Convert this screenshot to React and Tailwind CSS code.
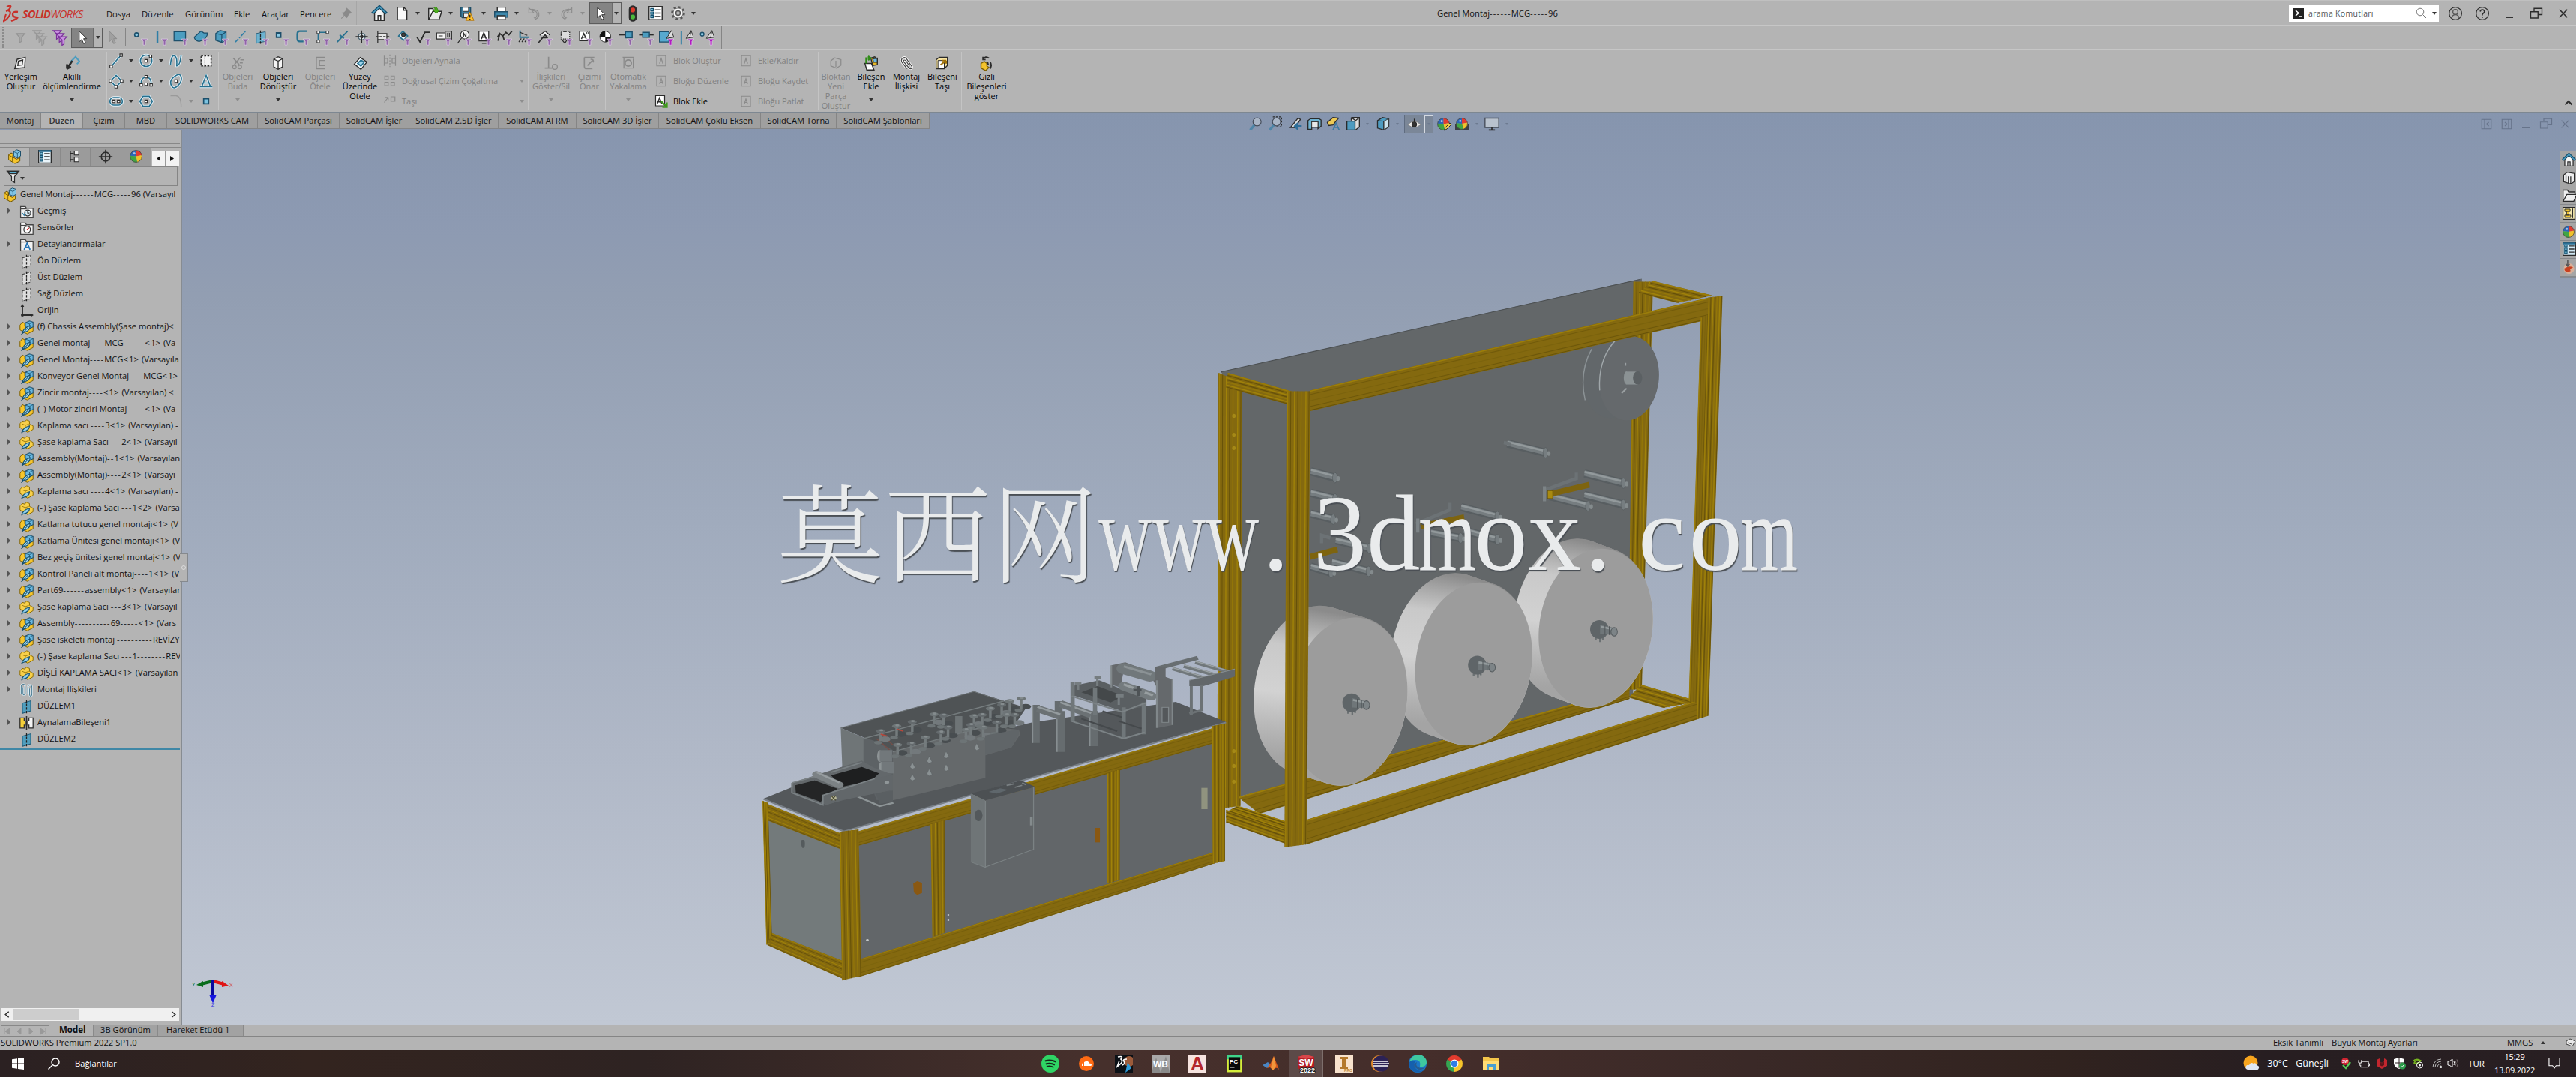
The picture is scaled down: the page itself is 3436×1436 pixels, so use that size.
import React from "react";

const INK = "#2b2b2b";
const BLUE = "#2f7ea6";
const LBLUE = "#7cc3e0";
const GOLD = "#e9b824";

/* ---------- shared small pieces ---------- */
const Ico = ({ s = 20, vb = "0 0 24 24", children, c = "" }) => (
  <svg width={s} height={s} viewBox={vb} fill="none" stroke={INK} strokeWidth="1.6" className={"shrink-0 " + c}>
    {children}
  </svg>
);

const Caret = ({ dim }) => (
  <svg width="6" height="4" viewBox="0 0 6 4" className="shrink-0">
    <path d="M0 0H6L3 4Z" fill={dim ? "#8e8e8e" : "#333"} />
  </svg>
);

/* Runs of hyphens and angle brackets are set a little wider than the letters */
const Dashed = ({ children }) =>
  children.split(/([-<>]+)/).map((part, i) => (i % 2 ? <span key={i} className="tracking-[1.200px]">{part}</span> : part));

/* Lays children on the centres given, by computing the gaps between them */
const CenterRow = ({ start = 0, items, className = "" }) => {
  let x = start;
  return (
    <div className={"flex items-center " + className}>
      {items.map(([c, w, el], i) => {
        const ml = c - w / 2 - x;
        x = c + w / 2;
        return (
          <div key={i} className="flex shrink-0 items-center justify-center" style={{ marginLeft: ml, width: w }}>
            {el}
          </div>
        );
      })}
    </div>
  );
};

/* ---------- icons ---------- */
const House = ({ s = 20 }) => (
  <Ico s={s}>
    <path d="M5 11V22H19V11L12 4Z" fill="#f4f4f4" />
    <path d="M10 22V15H14V22" />
    <path d="M1.5 12L12 2L22.5 12" stroke="#15506f" strokeWidth="4" />
    <path d="M2 12L12 2.5L22 12" stroke="#4a9cc0" strokeWidth="1.6" />
  </Ico>
);
const Doc = () => (
  <Ico s={20}><path d="M5 2H15L20 7V22H5Z" fill="#fafafa" /><path d="M15 2V7H20" /></Ico>
);
const Open = () => (
  <Ico s={22}>
    <path d="M3 5H9L10 8V21H3Z" fill="#fff" /><path d="M3 21L9 9H22L18 21Z" fill="#e9e9e9" />
    <path d="M10 3C14 2 16 4 16 7H19L14 12L9 7H12Q13 4 10 3" fill="#4caf1d" stroke="#2c7a0c" strokeWidth="1" />
  </Ico>
);
const Save = () => (
  <Ico s={22}>
    <path d="M3 3H17V18H5L3 16Z" fill="#3f7f9f" stroke="#1f4d66" /><path d="M6 3H14V9H6Z" fill="#fff" strokeWidth="1" /><path d="M7 12H14V18H7Z" fill="#eee" strokeWidth="1" />
    <path d="M16 10L22 22H10Z" fill="#ffc22e" stroke="#b06f00" strokeWidth="1" /><path d="M16 14V18M16 19.5V21" strokeWidth="1.8" />
  </Ico>
);
const Printer = () => (
  <Ico s={21}><path d="M6 3H18V10H6Z" fill="#fff" /><path d="M2 10H22V18H2Z" fill="#3d89ad" stroke="#1f4d66" /><path d="M6 16H18V22H6Z" fill="#fff" /></Ico>
);
const Undo = ({ flip }) => (
  <Ico s={20} c={flip ? "-scale-x-100" : ""}>
    <path d="M4 3V11H12L9 8Q17 7 17 13T13 19L15 21Q21 18 20 12T9 5L7 6Z" stroke="#8b8b8b" strokeWidth="1.3" />
  </Ico>
);
const Arrow = ({ s = 22, dim }) => (
  <Ico s={s}><path d="M7 2V19L11 15L14 22L17 20.5L14 14H19Z" fill={dim ? "#a0a0a0" : "#fff"} stroke={dim ? "#8b8b8b" : "#333"} strokeWidth="1.2" /></Ico>
);
const Traffic = () => (
  <Ico s={22}><rect x="7" y="1" width="10" height="22" rx="5" fill="#2c2c2c" /><circle cx="12" cy="7" r="3.4" fill="#e03a2c" stroke="none" /><circle cx="12" cy="17" r="3.4" fill="#4db83b" stroke="none" /></Ico>
);
const ListIco = ({ s = 21, frame = "#fff", bar }) => (
  <Ico s={s}>
    <path d="M2 2H22V22H2Z" fill={frame} /><path d="M4.5 5H8.5V8.500H4.500ZM4.500 10.300H8.500V13.800H4.500ZM4.500 15.500H8.500V19H4.500Z" fill={LBLUE} stroke="#14506e" strokeWidth="1.3" />
    <path d="M11 7H20M11 12H20M11 17H20" />
    {bar && <path d="M2 3H22" stroke="#2a6f94" strokeWidth="3" />}
  </Ico>
);
const Gear = () => (
  <Ico s={21}>
    <circle cx="12" cy="12" r="8.600" fill="#f2f2f2" strokeDasharray="3.400 3.350" strokeWidth="4" stroke="#555" /><circle cx="12" cy="12" r="7.600" fill="#f5f5f5" stroke="#555" strokeWidth="1" /><circle cx="12" cy="12" r="3.400" fill="#b4b4b4" stroke="#555" />
  </Ico>
);
const Ball = ({ s = 20 }) => (
  <Ico s={s}>
    <path d="M12 12L2 11A10 10 0 0 1 12 2Z" fill="#2b66b8" stroke="none" />
    <path d="M12 12V2A10 10 0 0 1 22 10Z" fill="#e23b30" stroke="none" />
    <path d="M12 12L22 10A10 10 0 0 1 14 22Z" fill="#f1c22b" stroke="none" />
    <path d="M12 12L14 22A10 10 0 0 1 2 11Z" fill="#41a543" stroke="none" />
    <circle cx="12" cy="12" r="10" stroke="#444" strokeWidth="1" /><circle cx="9" cy="7" r="2" fill="#fff" opacity=".6" stroke="none" />
  </Ico>
);

const Asm = ({ s = 20 }) => (
  <Ico s={s}>
    <path d="M2 9L6 6L9 8V13L15 16L20 13V19L12 23L2 17Z" fill="#f6c52c" stroke="#6b5200" strokeWidth="1.2" />
    <path d="M2 9L8 13V20M8 13L9 8" stroke="#6b5200" strokeWidth="1" />
    <path d="M10 4L15 1L21 3V11L16 14L10 11Z" fill="#7fc4e6" stroke="#1d4f6b" strokeWidth="1.2" />
    <path d="M10 4L16 6.500V14M16 6.500L21 3" stroke="#1d4f6b" strokeWidth="1" />
  </Ico>
);
const AsmFeather = () => (
  <Ico s={19}>
    <path d="M1 8L5 3L9 5V10L15 14L23 10V18L13 23L1 16Z" fill="#f6c52c" stroke="#7a5d00" strokeWidth="1.2" />
    <path d="M10 4L17 1L23 3V11L17 14L10 11Z" fill="#69b8e0" stroke="#1d4f6b" strokeWidth="1.3" />
    <path d="M10 4L17 6V10M17 6L23 3" stroke="#1d4f6b" strokeWidth="1" />
    <path d="M5 22Q6 13 18 9Q18 18 8 20Z" fill="#a5dcf4" stroke="#15506f" strokeWidth="1.500" /><path d="M3 24L15 12" stroke="#15506f" strokeWidth="1.300" />
  </Ico>
);
const PartFeather = () => (
  <Ico s={19}>
    <path d="M1 7L5 3L9 4L12 1L17 3V8L23 11V17L14 22L9 19L1 14Z" fill="#f8d04a" stroke="#8a6a00" strokeWidth="1.2" />
    <path d="M5 8L10 10L16 8M10 10V15" stroke="#8a6a00" strokeWidth="1" />
    <path d="M4 22Q6 14 17 11Q17 19 7 20.500Z" fill="#8fd0ee" stroke="#15506f" strokeWidth="1.500" />
  </Ico>
);
const FolderIco = ({ kind }) => (
  <Ico s={19}>
    <path d="M2 22V3H10L12 6H23V22Z" fill="#f2f2f2" stroke="#444" /><path d="M2 7H12" stroke="#444" />
    {kind === "h" && <><circle cx="14" cy="14" r="5" stroke="#333" fill="#dff1fa" /><path d="M14 11V14H17" /><path d="M5 14L8 18L10 13" stroke={BLUE} /></>}
    {kind === "s" && <><circle cx="13" cy="14" r="5.500" stroke="#333" fill="#fff" /><path d="M13 15L16 11" stroke="#c22" strokeWidth="2" /></>}
    {kind === "a" && <path d="M8 20L13 9L18 20M10 16H16" stroke="#2473b5" strokeWidth="2.4" />}
  </Ico>
);
const PlaneIco = ({ fill }) => (
  <Ico s={19}>
    <path d="M5 6L19 2V19L5 23Z" fill={fill ? "#4f9dbd" : "#dcdcdc"} stroke={fill ? "#1d5875" : "#444"} strokeWidth="1.300" strokeDasharray={fill ? "" : "5 1.500"} />
    <path d="M12 1V24" stroke="#222" strokeDasharray="4 2" />
  </Ico>
);
const OriginIco = () => (
  <Ico s={19}><path d="M5 2V19H22" strokeWidth="2.400" /><path d="M5 0L8 5H2ZM24 19L19 16V22Z" fill={INK} stroke="none" /><circle cx="5" cy="19" r="2.500" fill={INK} stroke="none" /></Ico>
);
const MatesIco = () => (
  <Ico s={19}>
    <path d="M3 18V6Q3 2 6.500 2T10 6V17Q10 20 8 20T6 17V7M14 18V8Q14 3 17.500 3T21 7V18Q21 22 19 22T17 18V9" stroke="#e8f3f8" strokeWidth="3" />
    <path d="M3 18V6Q3 2 6.500 2T10 6V17Q10 20 8 20T6 17V7M14 18V8Q14 3 17.500 3T21 7V18Q21 22 19 22T17 18V9" stroke="#4c7d94" strokeWidth="1.300" />
  </Ico>
);
const MirrorIco = () => (
  <Ico s={19}><path d="M1 3H8V8H10V15H8V20H1Z" fill="#f4cf3a" /><path d="M23 3H16V8H14V15H16V20H23Z" fill="#f4f4f4" /><path d="M12 0V24" strokeWidth="2" /></Ico>
);

/* ---------- selection filter toolbar ---------- */
const Funnel = ({ hot }) => (
  <path d="M13.500 15H24L20.500 19V25H17V19Z" fill={hot ? "#b01cc0" : "#9063a8"} stroke="#ead8f0" strokeWidth=".8" />
);
const FILTERS = [
  <circle cx="6" cy="8" r="3.200" fill="#8ccbe6" stroke="#1b4f6b" strokeWidth="2" />,
  <path d="M7 2V22" stroke={BLUE} strokeWidth="3" />,
  <path d="M1 3H20V18H1Z" fill="#4c9dc0" stroke="#1d4f6b" />,
  <path d="M1 12L12 2L17 5L23 5Q22 16 9 19Q2 18 1 12Z" fill="#4c9dc0" stroke="#1d4f6b" />,
  <path d="M3 6L10 1L20 3V16L14 21L3 17ZM3 6L13 8V21M13 8L20 3" fill="#4c9dc0" stroke="#1d4f6b" />,
  <path d="M2 20L19 2" stroke={BLUE} strokeWidth="2" strokeDasharray="7 2 2 2" />,
  <><path d="M3 6L18 3V19L3 22Z" fill="#6cb2cf" stroke="#1d4f6b" strokeWidth="1" /><path d="M10 1V24" stroke="#222" strokeDasharray="4 2" /></>,
  <path d="M3 5H10V12H3Z" fill="#8ccbe6" stroke="#1d4f6b" strokeWidth="2.400" />,
  <path d="M20 2H8Q4 2 4 7V14Q4 19 8 19H14" stroke="#26708f" strokeWidth="3" />,
  <><path d="M5 4H20M5 4V19" stroke="#26708f" strokeWidth="2" /><path d="M3 2H7V6H3ZM18 2H22V6H18ZM3 17H7V21H3Z" fill="#fff" strokeWidth="1.200" /></>,
  <path d="M3 20L20 2M7 8L14 14" stroke="#26708f" strokeWidth="2.200" />,
  <><circle cx="10" cy="11" r="5.500" stroke="#4b626e" strokeWidth="2" fill="#dfe9ee" /><path d="M10 1V21M0 11H20" strokeWidth="1.400" /><circle cx="10" cy="11" r="2" fill="#333" /></>,
  <><path d="M3 2V21M3 6H18V16H3" fill="#e6e6e6" strokeWidth="1.500" /><path d="M0 11H22" strokeDasharray="4 2" /></>,
  <><path d="M4 10L11 2L19 10L12 17Z" fill="#e7f2f7" stroke="#26708f" strokeWidth="2" /><circle cx="12" cy="8" r="3" fill="#444" /></>,
  <path d="M1 12L6 20L14 4H22" strokeWidth="2.200" />,
  <><path d="M0 5H14V15H0Z" fill="#f3f3f3" strokeWidth="1.300" /><path d="M14 2H25V15H14ZM18 5V12M21 5V12M3 10H10" strokeWidth="1.300" /></>,
  <><circle cx="13" cy="8" r="7" fill="#f5f5f5" strokeWidth="1.300" /><path d="M11 12V5L15 12V5M8 13L1 22" strokeWidth="1.500" /></>,
  <><path d="M3 2H19V18H3Z" fill="#fff" strokeWidth="1.500" /><path d="M7 15L11 5L15 15M8 12H14M8 22H15" strokeWidth="2" /></>,
  <path d="M1 18L4 6L9 10L14 4L19 8L24 2M9 10L11 16M4 6L0 12" strokeWidth="2.200" />,
  <><path d="M4 1V12H18" stroke="#26708f" strokeWidth="2.400" /><path d="M2 20L6 14M7 20L11 14M12 20L16 14M4 4L16 9" /></>,
  <><path d="M3 9L12 2L20 9" fill="#f3f3f3" strokeWidth="1.500" /><path d="M1 21L12 8L16 14M6 13H15" strokeWidth="2" /></>,
  <><path d="M5 3H19V15H5Z" fill="#ddd" strokeDasharray="2 1.500" /><path d="M6 16L11 22L15 16" /></>,
  <><path d="M2 2H18V18H2Z" fill="#fff" strokeWidth="1.400" /><path d="M5 15L9 6L13 15M6 12H12" strokeWidth="1.800" /><circle cx="15" cy="5" r="1.500" strokeWidth="1" /></>,
  <><circle cx="11" cy="11" r="9" fill="#fff" strokeWidth="1.200" /><path d="M11 11V2A9 9 0 0 0 2 11ZM11 11V20A9 9 0 0 0 20 11Z" fill="#111" strokeWidth="0" /></>,
  <><path d="M0 8H12" strokeWidth="2.200" /><path d="M11 3H22V13H11Z" fill="#4c9dc0" stroke="#1d4f6b" strokeWidth="1.800" /></>,
  <><path d="M0 8H24" strokeWidth="2.200" /><path d="M6 4H17V12H6Z" fill="#4c9dc0" stroke="#1d4f6b" strokeWidth="1.800" /></>,
  <><path d="M0 3H16V20H0Z" fill="#57a9cf" stroke="#1d4f6b" /><path d="M12 14L20 1L24 12Z" fill="#ddd" strokeWidth="1.200" /></>,
  <><path d="M3 2V24" stroke={BLUE} strokeWidth="2.400" /><path d="M11 14L19 1L23 12ZM19 1L17 13" fill="#ddd" strokeWidth="1.200" /></>,
  <><circle cx="4" cy="7" r="3" fill="#8ccbe6" stroke="#1b4f6b" /><path d="M11 14L20 1L24 12ZM20 1L18 13" fill="#ddd" strokeWidth="1.200" /></>,
];

const FunnelTri = ({ dim }) => {
  const st = dim ? "#989898" : "#7a2f9a";
  const fl = dim ? "#b0b0b0" : "#c78fe0";
  return (
    <Ico s={22}>
      {[0, 1, 2].map((i) => (
        <path key={i} d={`M${1 + i * 4} ${2 + i * 4.500}h12l-4 4.500v6l-3 2v-8z`} fill={fl} stroke={st} strokeWidth="1.300" />
      ))}
    </Ico>
  );
};

const SelectBox = ({ w = 43, h = 28 }) => (
  <div className="flex border border-[#5c5c5c]" style={{ width: w, height: h }}>
    <div className="flex flex-1 items-center justify-center bg-[#848484]"><Arrow s={20} /></div>
    <div className="flex w-[12px] items-center justify-center border-l border-[#6b6b6b]"><Caret /></div>
  </div>
);

/* ---------- top bars ---------- */
function TitleBar() {
  const menu = [["Dosya", 47], ["Düzenle", 58], ["Görünüm", 65], ["Ekle", 37], ["Araçlar", 51], ["Pencere", 54]];
  return (
    <div className="flex h-[34px] items-center border-b border-[#c6c6c6] border-t-2 border-t-[#c0c0c0]">
      <div className="flex w-[142px] items-center pl-[4px]">
        <svg width="22" height="24" viewBox="0 0 22 24" fill="none" stroke="#c8312b" strokeWidth="2">
          <path d="M5 3Q12 0 10 4Q8 8 4 9M4 8Q12 8 9 14Q6 20 1 22L4 13" /><path d="M20 10Q13 9 13 13T18 17T11 22" strokeWidth="2.400" />
        </svg>
        <div className="pl-[4px] pt-1 text-[14.500px] italic leading-none tracking-[-0.6px] text-[#c8312b]"><b>SOLID</b>WORKS</div>
      </div>
      {menu.map(([t, w]) => <div key={t} className="shrink-0 pt-[2px] font-medium" style={{ width: w }}>{t}</div>)}
      <div className="w-[21px]">
        <Ico s={16}><path d="M13 2L22 11L18 12L14 17L13 20L4 11L8 10L12 6ZM8 15L2 22" fill="#8a8a8a" stroke="#8a8a8a" /></Ico>
      </div>
      <div className="h-full w-px bg-[#a6a6a6]" />
      <CenterRow start={476} items={[
        [506, 20, <House s={22} />], [536, 20, <Doc />], [557, 6, <Caret />], [580, 22, <Open />], [601, 6, <Caret />], [623, 22, <Save />], [645, 6, <Caret />],
        [668, 21, <Printer />], [689, 6, <Caret />], [712, 20, <Undo />], [733, 6, <Caret dim />], [756, 20, <Undo flip />], [777, 6, <Caret dim />],
        [807, 43, <SelectBox h={29} />], [844, 22, <Traffic />], [874, 21, <ListIco />], [904, 21, <Gear />], [925, 6, <Caret />],
      ]} />
      <div className="w-[989px]" />
      <div className="w-[1136px] shrink-0"><Dashed>Genel Montaj------MCG-----96</Dashed></div>
      <div className="flex h-[22px] w-[200px] shrink-0 items-center bg-white pl-[6px] text-[10.500px] tracking-[0.3px] text-[#555]">
        <svg width="14" height="14" viewBox="0 0 14 14" className="mr-[6px]"><rect width="14" height="14" fill="#222" /><path d="M3 3L7 6.500L3 10M8 11H12" stroke="#fff" strokeWidth="1.500" fill="none" /></svg>
        <span className="flex-1">arama Komutları</span>
        <svg width="15" height="15" viewBox="0 0 15 15" fill="none" stroke="#777"><circle cx="6" cy="6" r="4.800" /><path d="M9.500 9.500L14 14" /></svg>
        <span className="ml-[7px] mr-[3px]"><Caret /></span>
      </div>
      <CenterRow start={3253} items={[
        [3275, 20, <Ico s={20}><circle cx="12" cy="12" r="10" /><circle cx="12" cy="9.500" r="4" stroke="#555" /><path d="M6 19Q7 14 12 14T18 19" stroke="#555" /></Ico>],
        [3311, 20, <Ico s={20}><circle cx="12" cy="12" r="10" /><path d="M8.500 9Q9 6 12 6T15.500 9Q15.500 11 12 12.500V15M12 17V19" strokeWidth="2" /></Ico>],
        [3347, 12, <div className="mt-[10px] h-[2px] w-[10px] bg-[#333]" />],
        [3383, 16, <Ico s={18}><path d="M8 8V3H22V14H15M2 9H15V20H2Z" strokeWidth="1.800" /></Ico>],
        [3419, 14, <Ico s={14}><path d="M3 3L21 21M21 3L3 21" strokeWidth="2.600" /></Ico>],
      ]} />
    </div>
  );
}

function FilterBar() {
  const head = [
    [4, 6, <div className="h-[28px] w-0 border-l-2 border-dotted border-[#8b8b8b]" />],
    [27, 16, <Ico s={17}><path d="M4 4H20L14 11V19L10 21V11Z" stroke="#939393" fill="#a8a8a8" /></Ico>],
    [54, 20, <FunnelTri dim />],
    [81, 20, <FunnelTri />],
    [116, 42, <SelectBox w={42} h={27} />],
    [150, 20, <Arrow s={20} dim />],
    [167, 2, <div className="h-[24px] w-px bg-[#858585]" />],
  ];
  const rest = FILTERS.map((g, i) => [187 + i * 27, 22, <Ico s={21} vb="0 0 25 26">{g}<Funnel hot={i > 25} /></Ico>]);
  return (
    <div className="flex h-[33px] items-center border-b border-[#c6c6c6]">
      <CenterRow items={[...head, ...rest, [962, 2, <div className="h-[31px] w-px bg-[#858585]" />]]} />
    </div>
  );
}

/* ---------- ribbon ---------- */
const Big = ({ icon, lines, dim, caret }) => (
  <div className={"flex h-[82px] flex-col items-center pt-[8px] text-center leading-[13px] " + (dim ? "text-[#818181]" : "text-black")}>
    <div className="mb-[2px] flex h-[18px] items-center">{icon}</div>
    {lines.map((l) => <div key={l} className="whitespace-nowrap">{l}</div>)}
    {caret && <div className={lines.length === 2 ? "mt-[10px]" : ""}><Caret dim={dim} /></div>}
  </div>
);
const Sep = () => <div className="h-[78px] w-px bg-[#c4c4c4]" />;
const DG = "#8a8a8a";
const dimBox = <Ico s={18}><path d="M4 3H20V21H4Z" stroke={DG} /><path d="M9 17L12 8L15 17M10 14H14" stroke={DG} /></Ico>;

const SmallList = ({ rows }) => (
  <div className="flex h-[80px] w-full flex-col justify-around">
    {rows.map(([ic, t, on, caret]) => (
      <div key={t} className={"flex h-[24px] items-center whitespace-nowrap " + (on ? "text-black" : "text-[#818181]")}>
        <span className="mr-[7px]">{ic}</span><span className="flex-1">{t}</span>{caret && <Caret dim />}
      </div>
    ))}
  </div>
);

function SketchGrid() {
  const S = (d, extra) => <Ico s={20}><path d={d} stroke="#e6f3f9" strokeWidth="4" /><path d={d} stroke="#26708f" strokeWidth="2" />{extra}</Ico>;
  const sq = (x, y) => <path key={x + "-" + y} d={`M${x - 2} ${y - 2}h4v4h-4z`} fill="#fff" strokeWidth="1.300" />;
  const rows = [
    [S("M4 21L20 3", <>{sq(4, 21)}{sq(20, 3)}</>), 1, S("M12 3a9 9 0 1 0 .1 0", <>{sq(12, 12)}{sq(19, 5)}</>), 1, S("M3 19Q4 3 9 4T13 20Q18 20 20 3"), 1, <Ico s={20}><path d="M4 4H20V20H4Z" fill="#f2f2f2" strokeDasharray="3 2" strokeWidth="2" /><path d="M10 2V22M15 2V22" strokeWidth="1" strokeDasharray="2 1" /></Ico>],
    [S("M3 12L12 3L21 12L12 21Z", <>{sq(3, 12)}{sq(12, 21)}{sq(21, 12)}</>), 1, S("M4 18Q3 6 12 6T20 18", <>{sq(4, 18)}{sq(12, 17)}{sq(20, 18)}{sq(12, 5)}</>), 1, S("M5 20Q0 12 9 5T20 5T15 19T5 20", <>{sq(12, 12)}</>), 1, S("M2 21H22M5 21L12 3L19 21M8 15H16")],
    [S("M8 6H16A6 6 0 0 1 16 18H8A6 6 0 0 1 8 6", <>{sq(8, 12)}{sq(16, 12)}</>), 1, S("M7 4H17L22 12L17 20H7L2 12Z", <>{sq(12, 12)}</>), 0, <Ico s={20}><path d="M3 3H12Q20 4 20 21" stroke="#9a9a9a" /></Ico>, 2, <Ico s={20}><path d="M8 8H16V16H8Z" fill={LBLUE} stroke="#1b4f6b" strokeWidth="2" /></Ico>],
  ];
  return (
    <div className="grid h-[80px] w-[140px] grid-cols-[20px_20px_20px_20px_20px_20px_20px] items-center justify-items-center">
      {rows.map((r, i) => r.map((e, j) => (
        <div key={i + "-" + j}>{j % 2 ? (e ? <Caret dim={e === 2} /> : null) : e}</div>
      )))}
    </div>
  );
}

function Ribbon() {
  const box = <Ico s={20}><path d="M5 6L12 2L19 5V18L12 22L5 18Z" fill="#f5f5f5" /><path d="M5 6L12 9V22M12 9L19 5" /></Ico>;
  return (
    <div className="flex h-[82px] items-center text-[11px]">
      <CenterRow items={[
        [28, 54, <Big icon={<Ico s={20}><path d="M6 6L19 3L18 19L2 21Z" fill="#eee" /><path d="M8 9L15 7L14 15L7 16Z" /></Ico>} lines={["Yerleşim", "Oluştur"]} />],
        [96, 82, <Big caret icon={<Ico s={21}><path d="M9 10L17 2L23 9L19 13" stroke="#4c9dc0" strokeWidth="2.400" /><path d="M4 20L12 8M4 20V13M4 20L10 17" strokeWidth="3" /></Ico>} lines={["Akıllı", "ölçümlendirme"]} />],
        [142, 1, <Sep />], [215, 140, <SketchGrid />], [291, 1, <Sep />],
        [317, 44, <Big dim caret icon={<Ico s={19}><path d="M4 3L14 14M16 2L6 14M16 6H22M15 11H20" stroke={DG} strokeWidth="2" /><circle cx="6" cy="18" r="3" stroke={DG} /><circle cx="15" cy="18" r="3" stroke={DG} /></Ico>} lines={["Objeleri", "Buda"]} />],
        [371, 54, <Big caret icon={box} lines={["Objeleri", "Dönüştür"]} />],
        [427, 44, <Big dim icon={<Ico s={20}><path d="M20 3H6V21H20M20 8H11V16H20" stroke={DG} /></Ico>} lines={["Objeleri", "Ötele"]} />],
        [480, 50, <Big icon={<Ico s={21}><path d="M3 13L12 3L22 10L13 21Z" fill="#fff" /><path d="M8 12L13 7L18 10L13 16Z" fill="#9fd4ea" stroke="#26708f" strokeWidth="2" /></Ico>} lines={["Yüzey", "Üzerinde", "Ötele"]} />],
        [605, 188, <SmallList rows={[
          [<Ico s={18}><path d="M2 3V21M2 8H8V16H2M22 3V21M22 8H16V16H22" stroke={DG} /><path d="M12 1V23" stroke={DG} strokeDasharray="3 2" /></Ico>, "Objeleri Aynala"],
          [<Ico s={18}><path d="M3 3H9V9H3ZM14 3H20V9H14ZM3 14H9V20H3ZM14 14H20V20H14Z" stroke={DG} /></Ico>, "Doğrusal Çizim Çoğaltma", 0, 1],
          [<Ico s={18}><path d="M2 14L9 5M9 5H4M9 5V10M14 4H21V12H14Z" stroke={DG} /></Ico>, "Taşı", 0, 1],
        ]} />],
        [704, 1, <Sep />],
        [735, 54, <Big dim caret icon={<Ico s={20}><path d="M8 2V20M2 20H14" stroke={DG} strokeWidth="2" /><circle cx="18" cy="18" r="4" stroke={DG} /></Ico>} lines={["İlişkileri", "Göster/Sil"]} />],
        [786, 38, <Big dim icon={<Ico s={20}><path d="M4 3H20M4 3V17Q4 21 8 21H17M9 16L17 8M14 6Q20 6 18 11" stroke={DG} strokeWidth="2" /></Ico>} lines={["Çizimi", "Onar"]} />],
        [807, 1, <Sep />],
        [838, 50, <Big dim caret icon={<Ico s={20}><path d="M3 3H21M5 3V20H20V5" stroke={DG} /><circle cx="12" cy="12" r="5" stroke={DG} strokeWidth="2" /></Ico>} lines={["Otomatik", "Yakalama"]} />],
        [868, 1, <Sep />],
        [926, 106, <SmallList rows={[[dimBox, "Blok Oluştur"], [dimBox, "Bloğu Düzenle"],
          [<Ico s={18}><path d="M2 2H18V20H2Z" fill="#fff" /><path d="M5 16L9 6L13 16M6 13H12" strokeWidth="2" /><path d="M12 12L22 22M22 14V22H14" stroke="#3f9b1c" strokeWidth="3" /></Ico>, "Blok Ekle", 1]]} />],
        [1036, 100, <SmallList rows={[[dimBox, "Ekle/Kaldır"], [dimBox, "Bloğu Kaydet"], [dimBox, "Bloğu Patlat"]]} />],
        [1091, 1, <Sep />],
        [1115, 44, <Big dim icon={<Ico s={18}><path d="M3 8L10 3L21 6V16L13 21L3 17ZM12 8V19" stroke={DG} /></Ico>} lines={["Bloktan", "Yeni", "Parça", "Oluştur"]} />],
        [1162, 44, <Big caret icon={<Ico s={21}><path d="M3 12H13L17 22H6Z" fill="#fff" /><path d="M12 4L18 2L22 5V14L15 15Z" fill={GOLD} /><path d="M15 5L22 4V10H16Z" fill="#6bb7df" /><path d="M5 12V4H10M8 1L12 4L8 7" stroke="#2f8c17" strokeWidth="2.500" /></Ico>} lines={["Bileşen", "Ekle"]} />],
        [1209, 44, <Big icon={<Ico s={20}><path d="M5 5Q9 1 12 5L21 18Q21 22 17 21L7 9Q8 6 11 8L17 17M5 5Q3 8 5 11L13 21" stroke="#fff" strokeWidth="3.400" /><path d="M5 5Q9 1 12 5L21 18Q21 22 17 21L7 9Q8 6 11 8L17 17M5 5Q3 8 5 11L13 21" stroke="#444" strokeWidth="1.500" /></Ico>} lines={["Montaj", "İlişkisi"]} />],
        [1257, 44, <Big icon={<Ico s={20}><path d="M2 7L7 3L20 3V16L15 21H2Z" fill="#f7e3a0" /><path d="M5 8H15V20H5Z" fill="#fff" strokeWidth="1.200" /><path d="M9 15L18 8M18 8H12M18 8V13" stroke="#a0720a" strokeWidth="2.500" /></Ico>} lines={["Bileşeni", "Taşı"]} />],
        [1282, 1, <Sep />],
        [1316, 56, <Big icon={<Ico s={21}><path d="M4 12L9 9L13 12V16L16 18L11 23L4 19Z" fill="#f3c32e" stroke="#7a5d00" /><path d="M7 6Q11 0 16 4M7 2V6H11M18 10Q21 14 18 20M14 10L15 14" strokeWidth="2" /></Ico>} lines={["Gizli", "Bileşenleri", "göster"]} />],
      ]} />
      <div className="ml-auto mr-[4px] mt-auto pb-[6px]"><Ico s={12}><path d="M3 17L12 8L21 17" strokeWidth="4" /></Ico></div>
    </div>
  );
}

const TABS = [["Montaj", 55], ["Düzen", 56, 1], ["Çizim", 56], ["MBD", 56], ["SOLIDWORKS CAM", 121], ["SolidCAM Parçası", 109], ["SolidCAM İşler", 93], ["SolidCAM 2.5D İşler", 119], ["SolidCAM AFRM", 104], ["SolidCAM 3D İşler", 110], ["SolidCAM Çoklu Eksen", 136], ["SolidCAM Torna", 101], ["SolidCAM Şablonları", 124]];

/* ---------- feature tree ---------- */
const TREE = [
  [1, "h", "Geçmiş"], [0, "s", "Sensörler"], [1, "a", "Detaylandırmalar"], [0, "p", "Ön Düzlem"], [0, "p", "Üst Düzlem"], [0, "p", "Sağ Düzlem"], [0, "o", "Orijin"],
  [1, "A", "(f) Chassis Assembly(Şase montaj)<"], [1, "A", "Genel montaj----MCG------<1> (Va"], [1, "A", "Genel Montaj----MCG<1> (Varsayıla"],
  [1, "A", "Konveyor Genel Montaj----MCG<1>"], [1, "A", "Zincir montaj----<1> (Varsayılan) <"], [1, "A", "(-) Motor zinciri Montaj-----<1> (Va"],
  [1, "P", "Kaplama sacı ----3<1> (Varsayılan) -"], [1, "P", "Şase kaplama Sacı ---2<1> (Varsayıl"], [1, "A", "Assembly(Montaj)--1<1> (Varsayılan"],
  [1, "A", "Assembly(Montaj)----2<1> (Varsayı"], [1, "P", "Kaplama sacı ----4<1> (Varsayılan) -"], [1, "P", "(-) Şase kaplama Sacı ---1<2> (Varsa"],
  [1, "A", "Katlama tutucu genel montajı<1> (V"], [1, "A", "Katlama Ünitesi genel montajı<1> (V"], [1, "A", "Bez geçiş ünitesi genel montaj<1> (V"],
  [1, "A", "Kontrol Paneli alt montaj----1<1> (V"], [1, "A", "Part69------assembly<1> (Varsayılan"], [1, "P", "Şase kaplama Sacı ---3<1> (Varsayıl"],
  [1, "A", "Assembly----------69-----<1> (Vars"], [1, "A", "Şase iskeleti montaj ----------REVİZY"], [1, "P", "(-) Şase kaplama Sacı ---1--------REV"],
  [1, "P", "DİŞLİ KAPLAMA SACI<1> (Varsayılan"], [1, "m", "Montaj İlişkileri"], [0, "d", "DÜZLEM1"], [1, "y", "AynalamaBileşeni1"], [0, "d", "DÜZLEM2"],
];
const treeIcon = (k) => ({
  h: <FolderIco kind="h" />, s: <FolderIco kind="s" />, a: <FolderIco kind="a" />, p: <PlaneIco />, d: <PlaneIco fill />, o: <OriginIco />,
  A: <AsmFeather />, P: <PartFeather />, m: <MatesIco />, y: <MirrorIco />,
}[k]);

function Panel() {
  const tabs = [
    <Asm s={20} />,
    <ListIco s={20} frame="#e9f4fa" bar />,
    <Ico s={18}><path d="M4 2V21M4 6H10M4 17H10" /><path d="M11 2H19V9H11ZM11 13H19V21H11Z" fill="#eee" /></Ico>,
    <Ico s={20}><circle cx="12" cy="12" r="7" strokeWidth="2" /><path d="M12 1V23M1 12H23" strokeWidth="2" /></Ico>,
    <Ball s={19} />,
  ];
  return (
    <div className="flex w-[243px] shrink-0 flex-col border-r-2 border-[#878c92] bg-[#b4b4b4]">
      <div className="mr-[1px] h-[19px] border-b border-[#888] border-t border-t-[#ccc]" />
      <div className="mt-[4px] flex h-[26px] border-t border-[#888]">
        {tabs.map((t, i) => (
          <div key={i} className={"flex w-[40.400px] items-center justify-center border-r border-[#8a8a8a] pb-[2px] " + (i ? "bg-[#9b9b9b]" : "bg-[#b4b4b4]")}>{t}</div>
        ))}
        <div className="ml-[1px] mt-[5px] flex h-[19px] bg-[#f2f2f2]">
          <div className="flex w-[18px] items-center justify-center border-r border-[#999]"><svg width="5" height="7"><path d="M5 0V7L0 3.500Z" fill="#111" /></svg></div>
          <div className="flex w-[18px] items-center justify-center"><svg width="5" height="7"><path d="M0 0V7L5 3.500Z" fill="#111" /></svg></div>
        </div>
      </div>
      <div className="mb-[1px] ml-[5px] flex h-[26px] w-[232px] items-center border border-[#858585] pl-[2px]">
        <Ico s={19}><path d="M2 3H22L14.500 12V22L9.500 19V12Z" fill="#f4f4f4" /><path d="M3 3H21L18 7H6Z" fill="#5aaed0" /></Ico>
        <span className="mt-[6px]"><Caret /></span>
      </div>
      <div className="w-[240px] overflow-hidden">
        <div className="flex h-[22px] items-center whitespace-nowrap pb-[1px] pl-[4px]"><Asm s={20} /><span className="pb-[1px] pl-[3px]"><Dashed>Genel Montaj------MCG-----96 (Varsayıl</Dashed></span></div>
        {TREE.map(([ex, k, t], i) => (
          <div key={i} className="flex h-[22px] items-center whitespace-nowrap">
            <div className="w-[26px] shrink-0 pb-[3px] pl-[10px]">{ex ? <svg width="4" height="8"><path d="M0 0V8L4 4Z" fill="#555" /></svg> : null}</div>
            {treeIcon(k)}
            <span className="pb-[2px] pl-[5px]"><Dashed>{t}</Dashed></span>
          </div>
        ))}
        <div className="h-[3px] w-[240px] bg-[#3f87a6]" />
      </div>
      <div className="mb-[5px] ml-[1px] mt-auto flex h-[17px] w-[238px] items-center bg-[#f0f0f0]">
        <div className="flex w-[17px] justify-center"><Ico s={9}><path d="M18 2L6 12L18 22" strokeWidth="4" /></Ico></div>
        <div className="h-[15px] w-[88px] bg-[#cdcdcd]" />
        <div className="ml-auto flex w-[15px] justify-center"><Ico s={9}><path d="M6 2L18 12L6 22" strokeWidth="4" /></Ico></div>
      </div>
    </div>
  );
}

/* ---------- 3D model drawing ---------- */
const lerp = (p, q, t) => [p[0] + (q[0] - p[0]) * t, p[1] + (q[1] - p[1]) * t];
/* An aluminium profile: corners a-b along one edge, d-c along the other */
const Beam = ({ a, b, c, d, base = "#84690f", lines = [[0.04, "#9c7e0a", 3], [0.2, "#725b0b", 2], [0.5, "#7b630d", 2], [0.78, "#6e580b", 2], [0.96, "#665209", 2]] }) => (
  <g>
    <polygon points={[a, b, c, d].map((p) => p.join(",")).join(" ")} fill={base} />
    {lines.map(([t, col, w], i) => {
      const s = lerp(a, d, t), e = lerp(b, c, t);
      return <line key={i} x1={s[0]} y1={s[1]} x2={e[0]} y2={e[1]} stroke={col} strokeWidth={w} />;
    })}
  </g>
);
const POST = [[0.05, "#9c7e08", 3], [0.18, "#665109", 2], [0.34, "#a08209", 3], [0.48, "#665109", 2.5], [0.62, "#937609", 3], [0.82, "#a08209", 3], [0.95, "#665109", 2]];
const Post = (p) => <Beam {...p} lines={POST} />;

const Rod = ({ p, w = 19 }) => {
  const [x1, y1, x2, y2] = p;
  return (
    <g strokeLinecap="butt">
      <line x1={x1} y1={y1} x2={x2} y2={y2} stroke="#585e61" strokeWidth={w + 2} />
      <line x1={x1} y1={y1 - 1} x2={x2} y2={y2 - 1} stroke="#767d80" strokeWidth={w - 5} />
      <line x1={x1} y1={y1 - 4} x2={x2} y2={y2 - 4} stroke="#939a9c" strokeWidth="5" />
      <ellipse cx={x2} cy={y2} rx="7" ry="13" fill="#767d80" stroke="#4d5255" />
      <ellipse cx={x2 + 9} cy={y2 + 2} rx="5" ry="6" fill="#848b8d" />
    </g>
  );
};

const Spool = ({ back, face, id, rx = 163, ry = 209 }) => (
  <g>
    <defs>
      <linearGradient id={id} gradientUnits="userSpaceOnUse" x1={back[0] - 60} y1={back[1] - 200} x2={back[0] - 100} y2={back[1] + 190}>
        <stop offset="0" stopColor="#8b8b8b" /><stop offset=".3" stopColor="#c9c9c9" /><stop offset=".62" stopColor="#d2d2d2" /><stop offset="1" stopColor="#a4a4a4" />
      </linearGradient>
    </defs>
    {Array.from({ length: 25 }, (_, i) => {
      const [x, y] = lerp(back, face, i / 24);
      return <ellipse key={i} cx={x} cy={y} rx={rx} ry={ry + 2} transform={`rotate(13 ${x} ${y})`} fill={`url(#${id})`} />;
    })}
    <ellipse cx={face[0]} cy={face[1]} rx={rx} ry={ry} transform={`rotate(13 ${face[0]} ${face[1]})`} fill="#9c9c9c" />
    <g transform={`translate(${face[0] + 12} ${face[1] + 4})`}>
      <path d="M-12 8V28M0 10V32M8 8V26" stroke="#6a7072" strokeWidth="5" />
      <ellipse cx="-2" cy="0" rx="26" ry="24" fill="#5f6568" />
      <path d="M0 -12L40 -4V14L0 12Z" fill="#6f7679" /><path d="M2 -7L40 0" stroke="#949b9d" strokeWidth="5" />
      <ellipse cx="40" cy="6" rx="9" ry="11" fill="#7d8487" stroke="#555b5e" strokeWidth="2" /><path d="M14 -10V14M26 -8V14" stroke="#4e5457" strokeWidth="2" />
    </g>
  </g>
);

function Rack() {
  const rods = [[315, 552, 383, 568], [315, 607, 383, 622], [315, 660, 378, 674], [385, 728, 480, 748], [375, 783, 478, 807], [315, 795, 372, 810],
    [870, 480, 978, 504], [740, 643, 842, 667], [650, 708, 738, 722], [745, 702, 842, 726], [1088, 557, 1198, 582], [1088, 612, 1198, 637], [990, 615, 1098, 640]];
  return (
    <g transform="translate(1600 340) scale(0.47194 0.52296)">
      <polygon points="60,298 1250,60 1225,1125 115,1380 100,345" fill="#636769" />
      <line x1="60" y1="298" x2="1245" y2="62" stroke="#4b4f51" strokeWidth="2" />
      <Post a={[1226, 68]} b={[1211, 1108]} c={[1250, 1108]} d={[1282, 68]} />
      <Post a={[53, 300]} b={[50, 1412]} c={[116, 1405]} d={[120, 325]} />
      {[410, 458, 492, 1265, 1303, 1343].map((y) => <circle key={y} cx="97" cy={y} r="5" fill="#a58917" />)}
      <Beam a={[108, 1382]} b={[1215, 1105]} c={[1215, 1132]} d={[170, 1425]} />
      <Post a={[75, 1415]} b={[245, 1468]} c={[245, 1502]} d={[75, 1447]} />
      <Post a={[108, 1405]} b={[245, 1445]} c={[245, 1470]} d={[80, 1418]} />
      <Post a={[1250, 1096]} b={[1410, 1138]} c={[1310, 1155]} d={[1212, 1128]} />
      {rods.map((p, i) => <Rod key={i} p={p} />)}
      <path d="M975 600L1065 570V555M612 686L708 650V632M345 735V715L370 722M860 478L880 482" stroke="#6c7275" strokeWidth="9" fill="none" />
      <path d="M975 590V628M617 672V708" stroke="#7c8386" strokeWidth="9" />
      <path d="M990 610L1102 586M625 692L748 669M312 770L390 751" stroke="#7e640f" strokeWidth="15" />
      <rect x="984" y="601" width="14" height="20" fill="#a98a10" stroke="#5d4a08" />
      <ellipse cx="1168" cy="308" rx="83" ry="108" transform="rotate(9 1168 308)" fill="#62676a" />
      <ellipse cx="1214" cy="314" rx="84" ry="108" transform="rotate(9 1214 314)" fill="#65696c" />
      <path d="M1178 215Q1125 265 1131 345" fill="none" stroke="#a0a7aa" strokeWidth="3" />
      <path d="M1108 240Q1072 300 1090 370" fill="none" stroke="#8c9396" strokeWidth="3" />
      <rect x="1205" y="297" width="34" height="33" fill="#8b9294" /><ellipse cx="1238" cy="313" rx="13" ry="17" fill="#5b6063" /><ellipse cx="1206" cy="313" rx="7" ry="16" fill="#8b9294" />
      <path d="M1193 352L1207 340M1204 275V282" stroke="#9aa0a2" strokeWidth="4" />
      <Spool id="s3" back={[1050, 927]} face={[1120, 951]} rx={159} ry={204} />
      <Spool id="s2" back={[705, 1020]} face={[775, 1042]} />
      <Spool id="s1" back={[321, 1110]} face={[420, 1138]} rx={165} ry={216} />
      <Beam a={[303, 1440]} b={[1410, 1135]} c={[1410, 1183]} d={[303, 1503]} />
      <Beam a={[312, 345]} b={[1440, 108]} c={[1440, 164]} d={[312, 398]} />
      <Post a={[80, 300]} b={[262, 348]} c={[247, 380]} d={[75, 338]} />
      <Post a={[1282, 66]} b={[1450, 103]} c={[1350, 122]} d={[1240, 96]} />
      <Post a={[246, 347]} b={[240, 1510]} c={[303, 1503]} d={[313, 347]} />
      <Beam a={[1417, 160]} b={[1383, 1138]} c={[1408, 1142]} d={[1442, 150]} />
      <Post a={[1438, 108]} b={[1405, 1184]} c={[1438, 1175]} d={[1478, 104]} />
    </g>
  );
}

function Machine() {
  const knobs = [[403, 465, 1], [452, 445, 1], [500, 428], [567, 398], [596, 402], [540, 490], [497, 515], [455, 520], [588, 470], [690, 405], [715, 400], [740, 375], [775, 360], [800, 345], [680, 440], [718, 450], [760, 430], [790, 400], [815, 400], [835, 335], [610, 450], [665, 460]];
  return (
    <g transform="translate(1000 820) scale(0.43367 0.33333)">
      <polygon points="43,735 300,600 870,430 1310,348 1465,428 290,866" fill="#54585b" />
      <polygon points="55,770 280,885 285,1390 60,1280" fill="#737a7b" />
      <polygon points="325,900 1430,480 1430,965 335,1390" fill="#626669" />
      <path d="M43 737L290 866L1465 430" fill="none" stroke="#787f86" strokeWidth="6" />
      <Beam a={[328, 868]} b={[1432, 450]} c={[1432, 512]} d={[328, 926]} />
      <Beam a={[338, 1376]} b={[1430, 948]} c={[1430, 994]} d={[332, 1450]} />
      <Beam a={[48, 752]} b={[282, 875]} c={[277, 936]} d={[54, 822]} lines={POST} />
      <Beam a={[62, 1268]} b={[285, 1382]} c={[298, 1462]} d={[54, 1320]} lines={POST} />
      <Post a={[40, 744]} b={[52, 1320]} c={[68, 1280]} d={[56, 752]} />
      <Post a={[556, 838]} b={[562, 1288]} c={[602, 1270]} d={[600, 820]} />
      <Post a={[1099, 635]} b={[1100, 1075]} c={[1138, 1060]} d={[1139, 618]} />
      <Post a={[1422, 445]} b={[1424, 995]} c={[1462, 984]} d={[1462, 435]} />
      <Post a={[276, 868]} b={[284, 1462]} c={[344, 1442]} d={[335, 858]} />
      <path d="M160 900h8q4 14 0 32h-6q-6-14-2-32" fill="#555b5d" />
      <g fill="#8a5812"><path d="M503 1075L515 1065L530 1072V1112L515 1120L505 1110Z" /><path d="M1061 852H1077V910H1061Z" /></g>
      <rect x="1389" y="692" width="19" height="85" fill="#90937f" />
      <g fill="#c4c8c8"><circle cx="611" cy="1200" r="3" /><circle cx="611" cy="1221" r="3" /><circle cx="362" cy="1300" r="4" /></g>

      {/* electrical housing behind the rollers */}
      <polygon points="280,452 690,306 850,372 800,470 440,600 350,490" fill="#4f5355" />
      <polygon points="280,452 352,492 352,600 285,615" fill="#6f7577" />
      <path d="M280 452L690 307L790 350" fill="none" stroke="#6d7376" strokeWidth="3" />
      <polygon points="350,490 385,505 440,540 440,745 390,740 350,600" fill="#5d6265" />
      <polygon points="440,548 725,445 828,460 832,478 805,530 725,562 725,652 440,742" fill="#65696b" />
      <path d="M440 548L725 445M350 495L780 345" stroke="#757c7e" strokeWidth="4" />
      <path d="M330 725L400 765L442 752" fill="none" stroke="#8d9496" strokeWidth="7" />
      <polygon points="388,712 440,705 440,748 400,756" fill="#5a5f62" />
      <path d="M390 495L430 540M400 470L440 520" stroke="#74504a" strokeWidth="4" />
      {[[400, 565], [405, 612]].map(([x, y]) => <g key={y}><ellipse cx={x} cy={y} rx="8" ry="24" fill="#8d9395" /><rect x={x} y={y - 24} width="38" height="46" fill="#72787b" /></g>)}
      {knobs.map(([x, y, red], i) => (
        <g key={i}>
          <ellipse cx={x + 14} cy={y + 32} rx="16" ry="11" fill={i % 3 ? "#484d50" : "#73797c"} />
          <rect x={x - 4} y={y} width="8" height="40" fill="#747b7d" />
          <ellipse cx={x} cy={y} rx="14" ry="8" fill={i % 2 ? "#6e7577" : "#656b6e"} />
          <ellipse cx={x + 2} cy={y - 3} rx="6" ry="4" fill="#858c8e" />
          <ellipse cx={x - 8} cy={y + 46} rx="12" ry="7" fill="#6d7476" />
          {red && <path d={`M${x} ${y + 12}l20 8`} stroke="#b5483c" strokeWidth="5" />}
        </g>
      ))}
      <rect x="632" y="405" width="22" height="70" fill="#6e7476" />
      <polygon points="724,482 828,458 828,478 805,530 724,560" fill="#606568" />
      {[[500, 605], [552, 582], [604, 562], [500, 652], [552, 632], [604, 613], [698, 530]].map(([x, y]) => (
        <path key={x + "-" + y} d={`M${x} ${y - 16}L${x + 9} ${y + 6}L${x} ${y + 12}L${x - 7} ${y + 4}Z`} fill="#8a9193" stroke="#55595c" />
      ))}
      {/* feed conveyor */}
      <polygon points="290,605 345,583 380,610 440,640 440,700 290,740 235,760 135,715 130,672" fill="#63686b" />
      <polygon points="140,682 200,662 270,695 218,748 142,712" fill="#242526" />
      <polygon points="250,642 345,608 398,634 375,662 285,688" fill="#1e1f20" />
      <polygon points="265,700 385,655 440,640 440,700 300,735 232,762 222,728" fill="#62676a" />
      <path d="M130 672L205 645M250 630L345 590M130 672V712L225 760V722L385 655" fill="none" stroke="#7a8184" strokeWidth="5" />
      <path d="M205 638L276 680" stroke="#7c8285" strokeWidth="26" strokeLinecap="round" /><path d="M207 630L276 671" stroke="#969c9f" strokeWidth="7" />
      <circle cx="258" cy="733" r="9" fill="#b6b69a" /><path d="M252 725L265 742M265 722L252 742" stroke="#4a4a30" strokeWidth="3" />
      <circle cx="422" cy="670" r="7" fill="#8f9698" />

      {/* control box */}
      <polygon points="680,715 835,662 878,688 725,744" fill="#4c5053" />
      <polygon points="680,715 725,742 725,1010 680,988" fill="#6f7577" />
      <polygon points="725,742 878,688 873,940 725,1010" fill="#606467" />
      <path d="M735 708L770 694L795 700L760 715Z" fill="#5f676c" /><path d="M790 682L812 676M815 690L838 682M838 672L850 680" stroke="#7a8083" strokeWidth="5" />
      <path d="M726 1008L873 938V690M725 744V1010L680 988" fill="none" stroke="#7b8284" strokeWidth="3" />
      <ellipse cx="704" cy="802" rx="12" ry="23" fill="#53585b" /><rect x="862" y="808" width="8" height="34" fill="#848b8d" />

      {/* roller stands and the outfeed bracket */}
      <g>
        <path d="M880 360V512M958 385V548M950 345V400M1058 385V525" stroke="#666c6f" strokeWidth="24" />
        <path d="M870 360V512M945 395V548M1046 395V525" stroke="#878e91" strokeWidth="4" />
        <path d="M885 375L955 405M955 355L1050 400" stroke="#6b7174" strokeWidth="28" /><path d="M885 368L955 398M955 350L1050 393" stroke="#959c9f" strokeWidth="7" />
        <polygon points="990,285 1075,262 1220,335 1220,365 1145,385 990,320" fill="#5a5f62" />
        <path d="M1020 310L1070 285L1150 325L1110 350Z" fill="#44484a" />
        <path d="M993 270V425M1150 370V495M1212 350V478M1062 400V290" stroke="#70777a" strokeWidth="13" />
        <path d="M990 425L1150 495L1215 470M990 325L1145 388L1218 352" fill="none" stroke="#7b8285" strokeWidth="6" />
        <path d="M1135 425L1205 455M1085 385L1145 410M1020 415L1130 465" stroke="#45494c" strokeWidth="6" />
        <path d="M1000 275H1020M1060 250H1080M1125 325H1150" stroke="#767d80" strokeWidth="14" /><path d="M1069 250V285M1010 275V300M1135 325V360" stroke="#767d80" strokeWidth="7" />
        <polygon points="1112,202 1155,190 1300,258 1302,440 1255,452 1252,290 1240,260 1150,225 1140,290 1112,280" fill="#65696c" />
        <path d="M1150 215L1230 245" stroke="#71787b" strokeWidth="44" strokeLinecap="round" /><path d="M1150 206L1235 238" stroke="#8b9295" strokeWidth="9" />
        <path d="M1150 285L1235 325" stroke="#747b7e" strokeWidth="34" strokeLinecap="round" /><path d="M1150 278L1180 292M1215 310L1240 322" stroke="#989fa1" strokeWidth="9" />
        <path d="M1252 262V452M1300 258V440M1112 202V290" stroke="#80878a" strokeWidth="5" /><rect x="1268" y="370" width="20" height="60" fill="#54585b" stroke="#80878a" strokeWidth="3" />
        <path d="M1180 300H1205M1195 285V325" stroke="#4e5356" strokeWidth="8" />
        <path d="M1300 215L1395 252M1335 205L1430 240M1370 190L1465 225" stroke="#70777a" strokeWidth="14" /><path d="M1300 211L1395 247M1335 200L1430 235M1370 186L1465 221" stroke="#9ba2a4" strokeWidth="4" />
        <path d="M1248 216L1378 172" stroke="#686e71" strokeWidth="16" /><path d="M1263 210V260" stroke="#65696c" strokeWidth="32" />
        <polygon points="1352,262 1492,215 1492,247 1395,285 1352,285" fill="#62676a" />
        <path d="M1358 285V400M1389 280V385M1352 395L1394 380" fill="none" stroke="#6c7275" strokeWidth="9" /><path d="M1352 262L1492 217" stroke="#868d90" strokeWidth="3" />
      </g>
    </g>
  );
}

/* Full-width CJK cells followed by half-width Latin cells */
function Watermark() {
  return (
    <div className="pointer-events-none absolute left-[1036px] top-[487px] flex h-[150px] items-center whitespace-nowrap text-[143px] leading-[150px] text-[#e9ebec] [text-shadow:1px_2px_1px_#4a4f55]">
      <span className="pb-[16px] font-light [font-family:'Noto_Serif_CJK_SC','Noto_Sans_CJK_SC',sans-serif]">莫西网</span>
      <span className="flex font-[400] [font-family:'Liberation_Serif',serif]">
        {"www.3dmox.com".split("").map((ch, i) => (
          <span key={i} className={"flex w-[71.600px] " + (ch === "." ? "justify-start pl-[4px]" : "justify-center")}>
            <span className={ch === "w" || ch === "m" ? "inline-block scale-x-[0.69]" : "inline-block"}>{ch}</span>
          </span>
        ))}
      </span>
    </div>
  );
}

function HeadsUp() {
  const mag = (x) => <Ico s={20}><path d="M3 22L10 14" stroke="#4f86a8" strokeWidth="4" />{x}<circle cx="14" cy="9" r="6.500" fill="#a9b5c6" strokeWidth="1.400" stroke="#444b57" /></Ico>;
  const dimc = <svg width="4" height="3"><path d="M0 0H4L2 3Z" fill="#6d7a90" /></svg>;
  return (
    <CenterRow className="mt-[2px] h-[26px]" start={1240} items={[
      [1675, 20, mag(<path d="M14 5V13M10 9H18" strokeWidth="1" />)], [1701, 20, mag(<path d="M8 1H22V17H12" strokeDasharray="3 2" />)],
      [1728, 20, <Ico s={20}><path d="M4 18L16 3L20 5L11 18Z" fill="#ddd" /><path d="M22 16H13M16 11L11 16L16 21" stroke="#2f6f9a" strokeWidth="3" /></Ico>],
      [1753, 20, <Ico s={20}><path d="M2 7L6 4H20L23 6V16L18 20V9H8V21H2Z" fill="#6db2d1" /><path d="M8 9H18V18H8Z" fill="#e8e8e8" strokeWidth="1" /></Ico>],
      [1778, 20, <Ico s={20}><path d="M3 10L12 2L21 3L12 14L5 15Z" fill="#edca55" /><path d="M12 22L17 11L22 22M14 18H20" stroke="#3b79a3" strokeWidth="2" /></Ico>],
      [1805, 20, <Ico s={20}><path d="M9 2H22V17L16 22M9 2V7M9 2L16 7M22 2L16 7" fill="#ddd" /><path d="M2 8H15V22H2Z" fill="#4e9bc0" /></Ico>],
      [1824, 4, dimc],
      [1845, 20, <Ico s={20}><path d="M3 7L11 2L21 4V17L13 22L3 19Z" fill="#4e9bc0" /><path d="M13 8L21 4V17L13 22Z" fill="#cde4ee" strokeWidth="1" /><path d="M3 7L13 8V22" strokeWidth="1.200" /></Ico>],
      [1864, 4, dimc],
      [1892, 39, <div className="flex h-[25px] w-[39px] border border-[#5f6c80] bg-[#7b8798]"><div className="flex w-[26px] items-center justify-center"><Ico s={19}><path d="M1 13Q12 2 23 13Q12 22 1 13Z" fill="#e9e9e9" strokeWidth="1" stroke="#777" /><circle cx="12" cy="12.500" r="3.800" fill="#333" /><path d="M12 3V9" strokeWidth="1.500" /></Ico></div><div className="flex flex-1 items-center justify-center border-l border-t border-[#d5dae2]">{dimc}</div></div>],
      [1925, 20, <div className="relative"><Ball s={19} /><svg className="absolute bottom-0 right-[-2px]" width="12" height="12"><path d="M1 11L3 7L9 1L11 3L5 9Z" fill="#f0cf4c" stroke="#333" /></svg></div>],
      [1950, 20, <div className="flex flex-col items-center bg-[linear-gradient(#0000_55%,#3b3f44_55%)]"><Ball s={18} /></div>],
      [1970, 4, dimc], [1990, 20, <Ico s={20}><path d="M1 3H23V18H1Z" fill="#b9c2ce" stroke="#444b57" /><path d="M12 18V22M7 22H17" strokeWidth="2" /></Ico>], [2010, 4, dimc],
      [3316, 14, <Ico s={15}><path d="M2 2H22V22H2ZM8 2V22M17 8L12 12L17 16" stroke="#66738a" strokeWidth="1.800" /></Ico>],
      [3343, 14, <Ico s={15}><path d="M2 2H22V22H2ZM16 2V22M8 8L13 12L8 16" stroke="#66738a" strokeWidth="1.800" /></Ico>],
      [3369, 12, <div className="mt-[10px] h-[2px] w-[10px] bg-[#66738a]" />],
      [3396, 16, <Ico s={18}><path d="M8 8V3H22V14H15M2 9H15V20H2Z" stroke="#66738a" /></Ico>],
      [3421, 12, <Ico s={13}><path d="M3 3L21 21M21 3L3 21" stroke="#66738a" strokeWidth="2" /></Ico>],
    ]} />
  );
}

function TaskPane() {
  const items = [
    <House s={19} />,
    <Ico s={19}><path d="M3 7L9 2L21 4V18L15 22L3 18ZM7 8V20M11 9V21M15 9V22" fill="#eee" /></Ico>,
    <Ico s={20}><path d="M2 21V3H9L11 6H21V10M2 21L8 10H24L19 21Z" fill="#eee" /></Ico>,
    <Ico s={19}><path d="M2 2H22V22H2Z" fill="#f5e9b0" /><path d="M5 5H14V9H5ZM8 9V15H12V9M5 15H15V19H5Z" fill="#f0c531" strokeWidth="1.200" /><path d="M18 4V20" strokeWidth="2" /></Ico>,
    <Ball s={18} />,
    <ListIco s={20} frame="#cfe7f3" bar />,
    <Ico s={19}><circle cx="12" cy="14" r="9" fill="#d8b09a" stroke="none" /><path d="M4 14Q12 8 19 12Q12 14 15 18Q8 22 5 17" fill="#c8401f" stroke="none" /><path d="M10 0V9M7 6L10 10L13 6" strokeWidth="2" stroke="#555" /></Ico>,
  ];
  return (
    <div className="absolute right-0 top-[51px] flex w-[22px] flex-col border border-r-0 border-[#858b92] bg-[#a5a5a5]">
      {items.map((el, i) => <div key={i} className="flex h-[23.800px] items-center overflow-hidden border-b border-[#87898c] pl-[2px]">{el}</div>)}
    </div>
  );
}

/* ---------- taskbar ---------- */
const Tile = ({ bg, children }) => <svg width="24" height="24" viewBox="0 0 24 24"><rect width="24" height="24" fill={bg} />{children}</svg>;
function Taskbar() {
  const apps = [
    [1401, 24, <svg width="24" height="24" viewBox="0 0 24 24" fill="none" stroke="#14281a" strokeWidth="2"><circle cx="12" cy="12" r="12" fill="#2fd565" stroke="none" /><path d="M5 8.500Q12 6 19.500 9.500M6 12.500Q12 10.500 18 13.500M7 16Q12 14.500 16.500 17" /></svg>],
    [1449, 20, <svg width="20" height="20" viewBox="0 0 20 20"><circle cx="10" cy="10" r="10" fill="#ff6a13" /><path d="M4 13V10L6 9V13M7 13V8L9 7Q13 6 13.500 9.500Q17 9.500 17 11.500T15 13Z" fill="#fff" /></svg>],
    [1499, 24, <Tile bg="#0b1016"><circle cx="19" cy="9" r="7" fill="#9c5b3a" /><path d="M14 24L17 10L22 18Z" fill="#2c9ad8" /><path d="M4 3Q12 1 8 6Q13 9 3 16L6 8M16 6Q10 6 12 9T10 14" stroke="#fff" strokeWidth="1.600" fill="none" /></Tile>],
    [1548, 24, <Tile bg="#a9a9a9"><path d="M0 24L6 4L12 24L19 2L24 24Z" fill="#8a8a8a" /><text x="12" y="17" textAnchor="middle" fontSize="12" fontWeight="700" fill="#fff" fontFamily="Liberation Sans">WB</text></Tile>],
    [1597, 24, <Tile bg="#f6e3df"><text x="12" y="21" textAnchor="middle" fontSize="25" fontWeight="700" fill="#b3262c" fontFamily="Liberation Sans">A</text></Tile>],
    [1646, 21, <svg width="22" height="24" viewBox="0 0 22 24"><rect width="22" height="24" fill="#d6ee3c" /><rect width="22" height="6" fill="#3fd48a" /><rect x="3" y="3" width="16" height="18" fill="#0a0a0a" /><text x="4" y="12" fontSize="8.500" fontWeight="700" fill="#fff" fontFamily="Liberation Sans">PC</text><path d="M5 17H11" stroke="#fff" strokeWidth="1.500" /></svg>],
    [1695, 24, <svg width="24" height="24" viewBox="0 0 24 24"><path d="M1 14L8 10L12 13L7 18Z" fill="#4a86c4" /><path d="M7 18L12 11L16 2L23 20Q19 15 15 21L11 17Z" fill="#d65a1c" /><path d="M16 2L19 15L15 21L12 17Z" fill="#f0963c" /></svg>],
    [1742.500, 45, <div className="flex h-[36px] w-[45px] items-center justify-center border-r border-[#7d6f6c] bg-[#5c4a48]"><svg width="26" height="24" viewBox="0 0 26 24"><path d="M2 3L13 0L24 3V18L13 24L2 18Z" fill="#b51c22" /><path d="M2 3L13 6L24 3L13 0Z" fill="#d9474a" /><text x="13" y="15" textAnchor="middle" fontSize="12" fontWeight="700" fill="#fff" fontFamily="Liberation Sans">SW</text><text x="15" y="24" textAnchor="middle" fontSize="9" fontWeight="700" fill="#fff" stroke="#222" strokeWidth="2" paintOrder="stroke" fontFamily="Liberation Sans">2022</text></svg></div>],
    [1793, 24, <Tile bg="#f8e2cd"><path d="M6 3H17V6H14V16H17V19H6V16H9V6H6Z" fill="#b4782b" /><text x="17.500" y="23" textAnchor="middle" fontSize="5" fontWeight="700" fill="#c08a45" fontFamily="Liberation Sans">PRO</text></Tile>],
    [1841, 24, <svg width="24" height="22" viewBox="0 0 24 22"><circle cx="11" cy="11" r="11" fill="#e28a2b" /><circle cx="13" cy="11" r="10.800" fill="#2c2255" /><path d="M3 8H23M3 11H24M3 14H23" stroke="#fff" strokeWidth="1.500" /></svg>],
    [1891, 24, <svg width="24" height="24" viewBox="0 0 24 24"><circle cx="12" cy="12" r="12" fill="#1c78c8" /><path d="M1 10Q4 0 13 0Q24 1 24 11Q23 17 15 16Q17 7 9 7Q3 7 1 10Z" fill="#3fc7a0" /><path d="M9 9Q5 14 10 19T21 20Q16 25 8 23Q-2 18 1 10Q4 6 9 9" fill="#1560ae" /><path d="M11 10Q8 16 16 18Q20 18 22 17Q16 23 10 18T11 10" fill="#3b2c2b" opacity=".35" /></svg>],
    [1940, 22, <svg width="22" height="22" viewBox="0 0 22 22"><path d="M11 11L1.500 5.500A11 11 0 0 1 20.500 5.500Z" fill="#e33b2e" /><path d="M11 11L20.500 5.500A11 11 0 0 1 11 22Z" fill="#f7c52b" /><path d="M11 11V22A11 11 0 0 1 1.500 5.500Z" fill="#35a552" /><circle cx="11" cy="11" r="5.500" fill="#fff" /><circle cx="11" cy="11" r="4.300" fill="#2f7de6" /></svg>],
    [1989, 22, <svg width="22" height="20" viewBox="0 0 22 20"><path d="M0 1H8L10 3H22V18H0Z" fill="#f4c64a" /><path d="M0 7H22V18H0Z" fill="#ffdc74" /><path d="M5 19V11H17V19H14V14H8V19Z" fill="#4a9fd0" /></svg>],
  ];
  const tray = [
    [3129, 14, <svg width="14" height="16" viewBox="0 0 14 16"><circle cx="6" cy="5" r="5" fill="#cf2531" /><text x="6" y="7" textAnchor="middle" fontSize="5" fontWeight="700" fill="#fff" fontFamily="Liberation Sans">SW</text><path d="M3 10L7 14L13 6" stroke="#58c857" strokeWidth="2.400" fill="none" /></svg>],
    [3153, 16, <svg width="17" height="12" viewBox="0 0 17 12" fill="none" stroke="#fff"><path d="M6 3H15V11H4V8M15 6H16.500V9H15M1 1V5H5V1M3 5V9" /></svg>],
    [3177, 14, <svg width="14" height="14" viewBox="0 0 14 14"><path d="M0 2L4 0V4L7 6L10 4V0L14 2V10L7 14L0 10Z" fill="#c2262e" /><path d="M4 4V9L7 10.500L10 9V4L7 6.500Z" fill="#5b1418" /></svg>],
    [3201, 16, <svg width="16" height="16" viewBox="0 0 16 16"><path d="M7 0L14 2V8Q13 13 7 15Q1 13 0 8V2Z" fill="#fff" /><path d="M7 1V14M1 7H13" stroke="#2a1f21" /><circle cx="11.500" cy="11" r="4.500" fill="#2c9c4a" /><path d="M9.500 11L11 12.500L13.500 9.500" stroke="#fff" fill="none" /></svg>],
    [3225, 16, <svg width="16" height="15" viewBox="0 0 16 15" fill="none"><path d="M1 5Q6 0 12 4Q8 9 3 7Q5 3 9 4" stroke="#77b41f" strokeWidth="1.500" /><circle cx="10.500" cy="10" r="4" stroke="#fff" /><circle cx="10.500" cy="10" r="1.500" fill="#fff" /></svg>],
    [3250, 14, <svg width="13" height="13" viewBox="0 0 13 13" fill="none" stroke="#bbb"><path d="M1 12A11 11 0 0 1 12 1M4 12A8 8 0 0 1 12 4M7 12A5 5 0 0 1 12 7" /><circle cx="11.500" cy="11.500" r="1.500" fill="#fff" /></svg>],
    [3272, 16, <svg width="16" height="13" viewBox="0 0 16 13" fill="none" stroke="#fff"><path d="M1 4V9H3L7 12V1L3 4ZM9 4Q10.500 6.500 9 9" /><path d="M11 3Q13 6.500 11 10M13 1.500Q16 6.500 13 11.500" stroke="#776d6e" /></svg>],
    [3303, 24, <span className="text-[11.500px]">TUR</span>],
    [3354, 60, <div className="text-center text-[11px] leading-[18px]"><div className="tracking-[-0.2px]">15:29</div><div className="tracking-[-0.2px]">13.09.2022</div></div>],
    [3407, 16, <svg width="17" height="17" viewBox="0 0 17 17" fill="none" stroke="#fff" strokeWidth="1.200"><path d="M1 1H16V12H11L8.500 15.500L6 12H1Z" /></svg>],
  ];
  return (
    <div className="flex h-[36px] shrink-0 items-center overflow-hidden bg-[linear-gradient(90deg,#2b2122_0%,#33241f_12%,#2e2322_25%,#46302c_42%,#452e2b_55%,#3a2927_68%,#31231f_80%,#271e21_88%,#281f22_100%)] text-white">
      <CenterRow className="-mt-px" items={[
        [24, 17, <svg width="16" height="16" viewBox="0 0 16 16" fill="#fff"><path d="M0 2.300L7 1.300V7.600H0ZM8 1.100L16 0V7.600H8ZM0 8.400H7V14.700L0 13.700ZM8 8.400H16V16L8 14.900Z" /></svg>],
        [72, 16, <svg width="16" height="16" viewBox="0 0 16 16" fill="none" stroke="#fff" strokeWidth="1.400"><circle cx="10" cy="6" r="5" /><path d="M6.500 9.500L0.500 15.500" /></svg>],
        [128, 60, <span className="text-[11.200px]">Bağlantılar</span>],
        ...apps,
        [3003, 22, <svg width="22" height="21" viewBox="0 0 22 21"><circle cx="10" cy="10" r="9.500" fill="#f7a51e" /><path d="M6 19Q2 18 4 14Q6 12 8 13Q10 8 14 11Q17 9 18 13Q22 14 21 17T17 19Z" fill="#dfe7f2" /></svg>],
        [3038, 32, <span className="text-[12.500px]">30°C</span>],
        [3084, 48, <span className="text-[12.500px]">Güneşli</span>],
        ...tray,
      ]} />
    </div>
  );
}

export default function App() {
  return (
    <div className="flex h-[1436px] w-[3436px] flex-col overflow-hidden bg-[#b4b4b4] text-[11.200px] leading-[14px] text-[#111] [font-family:'Open_Sans','Noto_Sans',sans-serif]">
      <TitleBar />
      <FilterBar />
      <Ribbon />
      <div className="relative flex h-[1217px] shrink-0 flex-col border-t border-[#7d8791] bg-[linear-gradient(180deg,#8695ae_0%,#8d9ab2_12%,#929eb2_20%,#a0abbd_45%,#b0b8c7_70%,#c1c8d4_100%)]">
        <svg className="absolute left-0 top-0" width="3436" height="1216" viewBox="0 150 3436 1216">
          <Rack />
          <Machine />
          <g strokeWidth="4" fill="none">
            <path d="M284 1308L268 1312" stroke="#0a6d1c" /><path d="M262 1313L271 1308V1316Z" fill="#0a6d1c" />
            <path d="M284 1308L299 1312" stroke="#e01515" /><path d="M305 1314L296 1308V1316Z" fill="#e01515" />
            <path d="M284 1306V1330" stroke="#0a0a9e" /><path d="M281 1328H287L284 1335Z" fill="#1616e0" stroke="#1616e0" strokeWidth="2" />
          </g>
          <g fontSize="7" fontFamily="Liberation Sans"><text x="256" y="1315" fill="#0a6d1c">Y</text><text x="306" y="1316" fill="#d04a50">X</text><text x="282" y="1342" fill="#3232e0">Z</text></g>
        </svg>
        <div className="relative flex h-[23px] items-start">
          <div className="flex h-[22px] w-[1240px] text-[11.200px]">
            {TABS.map(([t, w, on]) => (
              <div key={t} className={"flex shrink-0 items-center justify-center whitespace-nowrap border-b border-r border-[#858585] " + (on ? "bg-[#b4b4b4] font-semibold text-[#333]" : "bg-[#9f9f9f]")} style={{ width: w }}>{t}</div>
            ))}
          </div>
          <HeadsUp />
        </div>
        <div className="relative flex flex-1">
          <Panel />
        </div>
        <div className="absolute left-[240px] top-[588px] flex h-[38px] w-[11px] items-center justify-center border border-l-0 border-[#85898e] bg-[#b4b4b4]"><div className="size-[6px] rounded-full border border-[#ddd]" /></div>
        <TaskPane />
        <Watermark />
      </div>
      <div className="flex h-[16px] shrink-0 items-stretch border-b border-[#858585] border-t border-t-[#888] leading-[12px]">
        <div className="ml-[2px] flex w-[65px]">
          {["M9 1V9L3 5ZM2 1V9", "M8 1V9L3 5Z", "M3 1V9L8 5Z", "M2 1V9L8 5ZM9 1V9"].map((d) => (
            <div key={d} className="flex w-[16px] items-center justify-center border-r border-t border-[#888]"><svg width="11" height="10"><path d={d} fill="#999" stroke="#999" /></svg></div>
          ))}
        </div>
        <div className="w-[57px] pl-[12px] text-[11.500px] font-bold">Model</div>
        <div className="w-[87px] border-x border-[#8a8a8a] bg-[#a2a2a2] text-center">3B Görünüm</div>
        <div className="w-[114px] border-r border-[#8a8a8a] bg-[#a2a2a2] pl-[11px]">Hareket Etüdü 1</div>
      </div>
      <div className="flex h-[18px] shrink-0 items-center pb-[3px]">
        <div className="w-[3032px] pl-[1px]">SOLIDWORKS Premium 2022 SP1.0</div>
        <div className="w-[78px]">Eksik Tanımlı</div>
        <div className="w-[234px]">Büyük Montaj Ayarları</div>
        <div className="w-[45px]">MMGS</div>
        <svg width="6" height="4" className="rotate-180"><path d="M0 0H6L3 4Z" fill="#333" /></svg>
        <svg width="14" height="14" viewBox="0 0 14 14" className="ml-[27px]"><path d="M1 5L6 2L13 5L9 12L1 9ZM3 7L8 9" fill="#e8e8e8" stroke="#444" /></svg>
      </div>
      <Taskbar />
    </div>
  );
}
